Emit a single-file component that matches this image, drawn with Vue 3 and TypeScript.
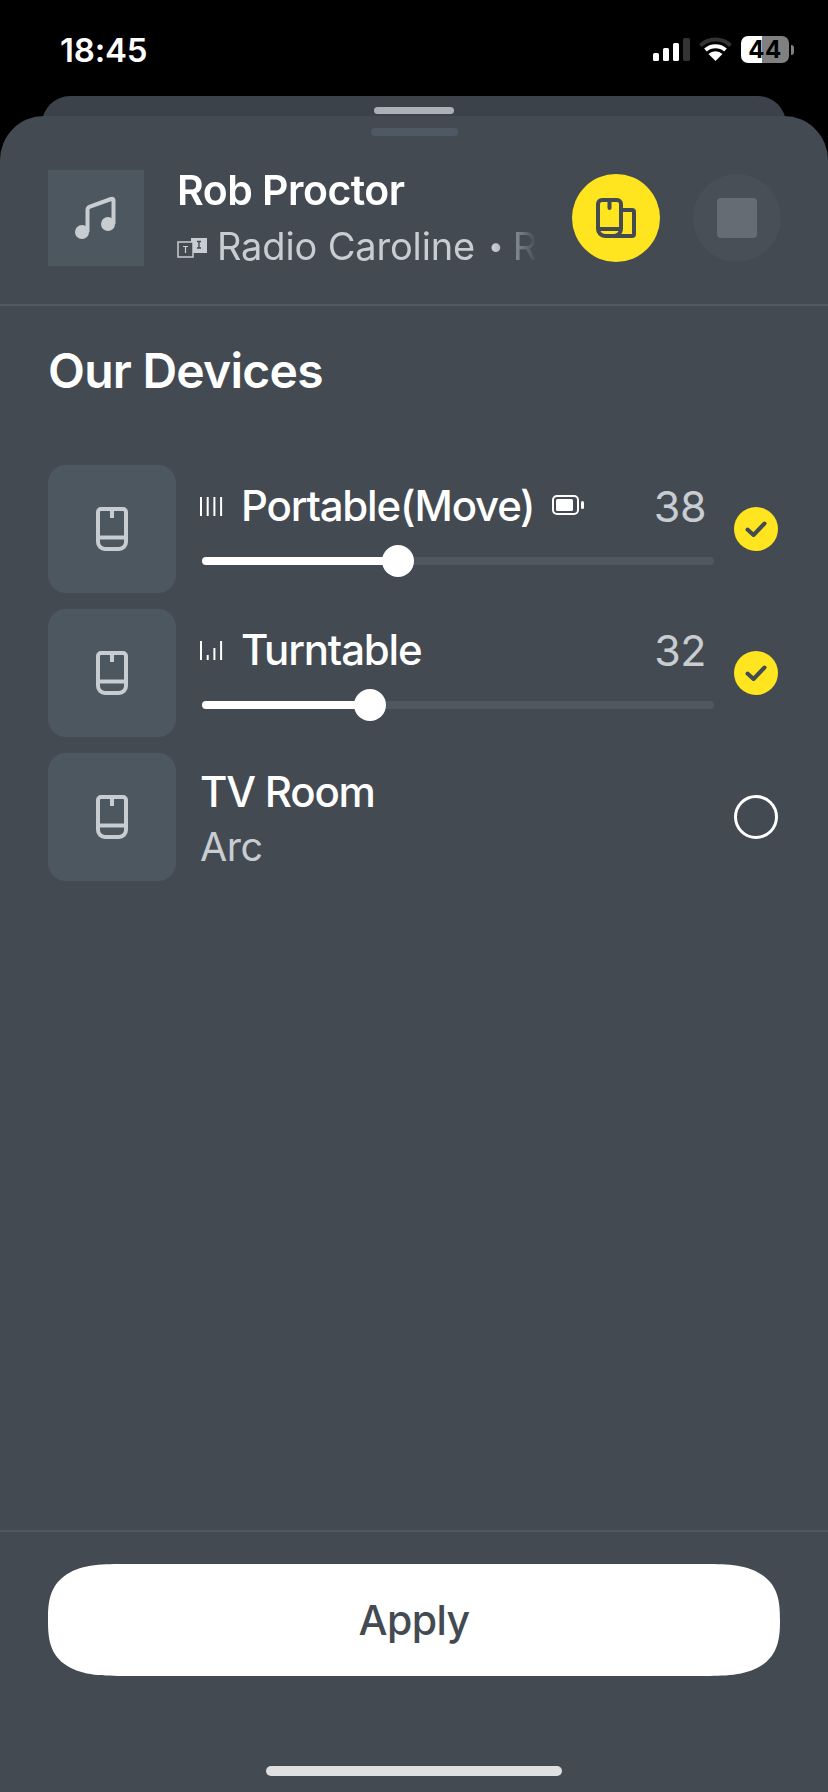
<script setup lang="ts">
interface Device {
  name: string
  subtitle?: string
  volume?: number
  bars?: number[]
  battery?: boolean
  selected: boolean
}

const devices: Device[] = [
  { name: 'Portable(Move)', volume: 38, bars: [19, 19, 19, 19], battery: true, selected: true },
  { name: 'Turntable', volume: 32, bars: [19, 5, 12, 19], selected: true },
  { name: 'TV Room', subtitle: 'Arc', selected: false },
]

const thumbX = (v: number): string => `${18.7 + v * 4.667}px`
</script>

<template>
  <div class="screen">
    <div class="status">
      <span class="time">18:45</span>
      <div class="status-icons">
        <svg class="signal" width="37" height="24" viewBox="0 0 37 24">
          <rect x="0" y="15" width="6" height="8" rx="1.5" fill="#fff" />
          <rect x="10" y="10" width="6" height="13" rx="1.5" fill="#fff" />
          <rect x="20" y="5" width="6" height="18" rx="1.5" fill="#fff" />
          <rect x="30" y="0" width="7" height="23" rx="1.5" fill="#333" />
        </svg>
        <svg class="wifi" width="33" height="24" viewBox="0 0 33 24">
          <path d="M1.5 8.5 A22 22 0 0 1 31.5 8.5" fill="none" stroke="#333" stroke-width="4" />
          <path d="M6.5 13 A15 15 0 0 1 26.5 13" fill="none" stroke="#fff" stroke-width="4" />
          <path d="M16.5 24 L9.5 17 A10 10 0 0 1 23.5 17 Z" fill="#fff" />
        </svg>
        <div class="battery">
          <div class="battery-body"><span>44</span></div>
          <div class="battery-nub"></div>
        </div>
      </div>
    </div>

    <div class="back-sheet"><div class="back-handle"></div></div>

    <div class="sheet">
      <div class="handle"></div>

      <div class="now-playing">
        <div class="art">
          <svg width="42" height="44" viewBox="0 0 42 44">
            <path d="M12.5 36 V14 Q12.5 11.5 15 10.6 L36 3 Q38.5 2.2 38.5 4.5 V28" fill="none" stroke="#c8cdd2" stroke-width="4" stroke-linejoin="round" />
            <circle cx="7" cy="36" r="7" fill="#c8cdd2" />
            <circle cx="33" cy="28" r="7" fill="#c8cdd2" />
          </svg>
        </div>
        <div class="track">
          <div class="track-title">Rob Proctor</div>
          <div class="track-sub">
            <svg class="ti" width="30" height="20" viewBox="0 0 30 20">
              <rect x="14" y="0" width="16" height="15" fill="#c8cdd2" />
              <rect x="1" y="4" width="15" height="15" fill="#434a52" stroke="#c8cdd2" stroke-width="1.5" />
              <path d="M6 8.5 H11 M8.5 8.5 V15" stroke="#c8cdd2" stroke-width="1.2" fill="none" />
              <path d="M20 3.5 H24 M22 3.5 V10 M20 10 H24" stroke="#434a52" stroke-width="1.4" fill="none" />
            </svg>
            <span>Radio Caroline</span><span class="sep">•</span><span>Rock</span>
          </div>
        </div>
        <button class="round yellow" type="button" aria-label="Devices">
          <svg width="40" height="40" viewBox="0 0 40 40" fill="none" stroke="#434a52" stroke-width="4" stroke-linejoin="round">
            <path d="M6 2 H21 A4 4 0 0 1 25 6 V31 A7 7 0 0 1 18 38 H9 A7 7 0 0 1 2 31 V6 A4 4 0 0 1 6 2 Z" />
            <path d="M2 31 H25" />
            <path d="M13.5 2 V10" stroke-linecap="round" />
            <path d="M25 12 H36 A2 2 0 0 1 38 14 V36 A2 2 0 0 1 36 38 H17" />
          </svg>
        </button>
        <button class="round stop" type="button" aria-label="Stop"><span class="stop-square"></span></button>
      </div>

      <div class="divider"></div>

      <h1 class="heading">Our Devices</h1>

      <div class="list">
        <div v-for="d in devices" :key="d.name" class="row">
          <div class="tile">
            <svg width="32" height="44" viewBox="0 0 32 44" fill="none" stroke="#c8cdd2" stroke-width="4" stroke-linejoin="round">
              <path d="M5 2 H27 A3 3 0 0 1 30 5 V35 A7 7 0 0 1 23 42 H9 A7 7 0 0 1 2 35 V5 A3 3 0 0 1 5 2 Z" />
              <path d="M2 30.5 H30" />
              <path d="M16 2 V11" />
            </svg>
          </div>

          <div v-if="d.volume !== undefined" class="body">
            <div class="line">
              <svg class="eq" width="23" height="19" viewBox="0 0 23 19">
                <rect
                  v-for="(h, i) in d.bars"
                  :key="i"
                  :x="i * 6.7"
                  :y="19 - h"
                  width="2"
                  :height="h"
                  fill="#fff"
                />
              </svg>
              <span class="name">{{ d.name }}</span>
              <svg v-if="d.battery" class="batt" width="32" height="20" viewBox="0 0 32 20">
                <rect x="1" y="1" width="25" height="18" rx="4" fill="none" stroke="#fff" stroke-width="2" />
                <rect x="4" y="4" width="17" height="12" rx="1.5" fill="#fff" />
                <rect x="29" y="6" width="3" height="8" rx="1.5" fill="#fff" />
              </svg>
              <span class="value">{{ d.volume }}</span>
            </div>
            <div class="slider">
              <div class="fill" :style="{ width: thumbX(d.volume) }"></div>
              <div class="thumb" :style="{ left: thumbX(d.volume) }"></div>
            </div>
          </div>
          <div v-else class="body plain">
            <div class="plain-name">{{ d.name }}</div>
            <div class="plain-sub">{{ d.subtitle }}</div>
          </div>

          <div class="check" :class="{ on: d.selected }">
            <svg v-if="d.selected" width="22" height="18" viewBox="0 0 22 18" fill="none" stroke="#434a52" stroke-width="4" stroke-linecap="round" stroke-linejoin="round">
              <path d="M2.5 9.5 L8.5 15 L19.5 3.5" />
            </svg>
          </div>
        </div>
      </div>

      <div class="footer">
        <button class="apply" type="button">Apply</button>
        <div class="home"></div>
      </div>
    </div>
  </div>
</template>

<style>
html, body { margin: 0; background: #000; }
</style>

<style scoped>
.screen {
  width: 828px;
  height: 1792px;
  background: #000;
  display: flex;
  flex-direction: column;
  overflow: hidden;
  font-family: Inter, "Liberation Sans", sans-serif;
  color: #fff;
}
.status {
  height: 96px;
  flex: none;
  display: flex;
  justify-content: space-between;
  padding: 36px 34px 0 60px;
  box-sizing: border-box;
}
.time {
  font-size: 33px;
  line-height: 28px;
  font-weight: 600;
  letter-spacing: -0.2px;
}
.status-icons { display: flex; align-items: flex-start; }
.signal { margin-top: 2px; }
.wifi { margin-left: 9px; margin-top: 1px; }
.battery { display: flex; align-items: center; margin-left: 9px; height: 27px; }
.battery-body {
  width: 48px;
  height: 27px;
  border-radius: 7px;
  background: linear-gradient(to right, #fff 44%, #808080 44%);
  color: #000;
  font-size: 24px;
  line-height: 27px;
  font-weight: 700;
  text-align: center;
  letter-spacing: 0.5px;
}
.battery-nub { width: 3px; height: 10px; margin-left: 2px; background: #808080; border-radius: 0 3px 3px 0; }

.back-sheet {
  flex: none;
  height: 60px;
  margin: 0 42px -40px;
  background: #3c4249;
  border-radius: 28px 28px 0 0;
  display: flex;
  justify-content: center;
}
.back-handle { width: 80px; height: 7px; margin-top: 11px; border-radius: 4px; background: #aab0b5; }

.sheet {
  position: relative;
  flex: 1;
  display: flex;
  flex-direction: column;
  background: #434a52;
  border-radius: 44px 44px 0 0;
}
.handle { align-self: center; width: 87px; height: 8px; margin-top: 12px; border-radius: 4px; background: #4f5963; }

.now-playing { display: flex; align-items: center; height: 96px; margin-top: 34px; padding-left: 48px; }
.art { width: 96px; height: 96px; flex: none; background: #4d5760; display: flex; align-items: center; justify-content: center; }
.track {
  width: 360px;
  margin-left: 33px;
  flex: none;
  overflow: hidden;
  white-space: nowrap;
  -webkit-mask-image: linear-gradient(to right, #000 88%, transparent 100%);
  mask-image: linear-gradient(to right, #000 88%, transparent 100%);
}
.track-title { font-size: 41px; line-height: 48px; font-weight: 600; letter-spacing: -0.5px; }
.track-sub { display: flex; align-items: center; font-size: 38px; line-height: 48px; color: #c8cdd2; letter-spacing: -0.15px; margin-top: 8px; }
.ti { flex: none; margin-right: 10px; margin-top: 4px; }
.sep { margin: 0 9px 0 13px; font-size: 28px; }

.round { width: 88px; height: 88px; padding: 0; border: 0; border-radius: 50%; display: flex; align-items: center; justify-content: center; flex: none; }
.yellow { background: #ffe420; margin-left: 35px; }
.stop { background: #484f57; margin-left: 33px; }
.stop-square { width: 40px; height: 40px; border-radius: 4px; background: #656c74; }

.divider { height: 2px; margin-top: 38px; background: #4f5a65; flex: none; }

.heading {
  margin: 35px 0 0 48px;
  font-size: 48px;
  line-height: 60px;
  font-weight: 600;
  letter-spacing: -0.75px;
}

.list { display: flex; flex-direction: column; gap: 16px; margin-top: 64px; }
.row { display: flex; padding: 0 48px; height: 128px; }
.tile { width: 128px; height: 128px; flex: none; border-radius: 18px; background: #4d5760; display: flex; align-items: center; justify-content: center; }

.body { width: 514px; margin-left: 24px; padding-top: 15px; box-sizing: border-box; flex: none; }
.line { display: flex; align-items: center; height: 52px; padding-right: 8px; }
.eq { flex: none; }
.name { font-size: 42px; line-height: 52px; margin-left: 18px; letter-spacing: -1.2px; font-weight: 500; }
.batt { margin-left: 18px; margin-top: -2px; flex: none; }
.value { margin-left: auto; font-size: 43px; line-height: 52px; color: #c8cdd2; letter-spacing: -0.5px; }
.slider { position: relative; height: 8px; margin: 25px 0 0 2px; background: #4f5760; border-radius: 4px; }
.fill { height: 8px; background: #fff; border-radius: 4px; }
.thumb { position: absolute; top: 50%; width: 32px; height: 32px; border-radius: 50%; background: #fff; transform: translate(-50%, -50%); }

.plain { padding-top: 13px; }
.plain-name { font-size: 42px; line-height: 52px; font-weight: 500; letter-spacing: -1.2px; }
.plain-sub { font-size: 39.5px; line-height: 52px; margin-top: 3px; color: #c8cdd2; letter-spacing: -0.5px; }

.check {
  width: 44px;
  height: 44px;
  margin: 42px 0 0 20px;
  flex: none;
  box-sizing: border-box;
  border-radius: 50%;
  border: 3.5px solid #fff;
  display: flex;
  align-items: center;
  justify-content: center;
}
.check.on { background: #ffe420; border: 0; }

.footer {
  margin-top: auto;
  border-top: 2px solid #4c5762;
  display: flex;
  flex-direction: column;
  align-items: center;
  padding-top: 32px;
  box-sizing: border-box;
  height: 262px;
}
.apply {
  width: 732px;
  height: 112px;
  flex: none;
  border: 0;
  border-radius: 74px / 56px;
  corner-shape: superellipse(1.5);
  background: #fff;
  color: #434a52;
  font-family: inherit;
  font-size: 41px;
  font-weight: 500;
  letter-spacing: -0.6px;
  padding: 0;
}
.home { width: 296px; height: 10px; margin-top: 90px; border-radius: 5px; background: #e0e0e0; }
</style>
